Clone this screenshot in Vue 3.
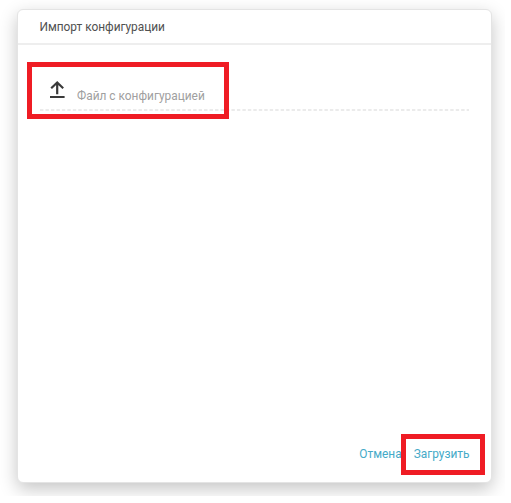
<script setup>
const title = 'Импорт конфигурации'
const fileLabel = 'Файл с конфигурацией'
</script>

<template>
  <div class="stage">
    <section class="dialog">
      <header class="header"><span class="title">{{ title }}</span></header>
      <main class="body">
        <div class="file-field">
          <svg class="upload" viewBox="0 0 18 20" width="18" height="20" fill="none" stroke="#3a3a3a" stroke-width="2.2">
            <path d="M9.2 14.3V3M3.2 8.2L9.2 2.5L15.2 8.2M2 17H16.6" />
          </svg>
          <span class="label">{{ fileLabel }}</span>
          <div class="mark mark-file"></div>
        </div>
        <svg class="dashes" width="429" height="2">
          <path d="M0 1H429" stroke="#ebebeb" stroke-width="2" stroke-dasharray="3.4 2.07" />
        </svg>
      </main>
      <footer class="footer">
        <button class="action cancel">Отмена</button>
        <div class="submit-wrap">
          <button class="action submit">Загрузить</button>
          <div class="mark mark-submit"></div>
        </div>
      </footer>
    </section>
  </div>
</template>

<style>
body {
  background: #fff;
}
</style>

<style scoped>
.stage {
  box-sizing: border-box;
  width: 505px;
  height: 496px;
  padding: 8.5px 0 0 17px;
  overflow: hidden;
  font-family: Roboto, sans-serif;
}
.dialog {
  box-sizing: border-box;
  display: flex;
  flex-direction: column;
  width: 474.5px;
  height: 474px;
  border: 1px solid #e4e4e4;
  border-radius: 6px;
  background: #fff;
  box-shadow: 0 6px 18px rgba(0, 0, 0, 0.23);
}
.header {
  box-sizing: border-box;
  display: flex;
  align-items: center;
  height: 35px;
  padding: 1px 0 0 21.5px;
  border-bottom: 2px solid #eee;
}
.title {
  font-size: 11.9px;
  line-height: 16px;
  letter-spacing: -0.02px;
  color: #505050;
}
.body {
  flex: 1;
  padding: 18.5px 0 0 22px;
}
.file-field {
  position: relative;
  display: flex;
  height: 46px;
  padding: 17px 0 0 8px;
  box-sizing: border-box;
}
.upload {
  flex: none;
}
.label {
  margin: 8px 0 0 11px;
  font-size: 11.9px;
  line-height: 16px;
  letter-spacing: 0;
  color: #a0a0a0;
  white-space: nowrap;
}
.dashes {
  display: block;
}
.mark {
  position: absolute;
  box-sizing: border-box;
  border: 5px solid #ef1c24;
  pointer-events: none;
}
.mark-file {
  top: -1px;
  left: -13px;
  width: 202px;
  height: 57px;
}
.footer {
  display: flex;
  justify-content: flex-end;
  padding: 0 21px 19.5px 0;
}
.action {
  padding: 0;
  border: 0;
  background: none;
  font-family: inherit;
  font-size: 11.9px;
  line-height: 16px;
  color: #45aac8;
}
.submit-wrap {
  position: relative;
  display: flex;
  margin-left: 12px;
}
.mark-submit {
  top: -12px;
  right: -15px;
  width: 84px;
  height: 41px;
}
</style>
